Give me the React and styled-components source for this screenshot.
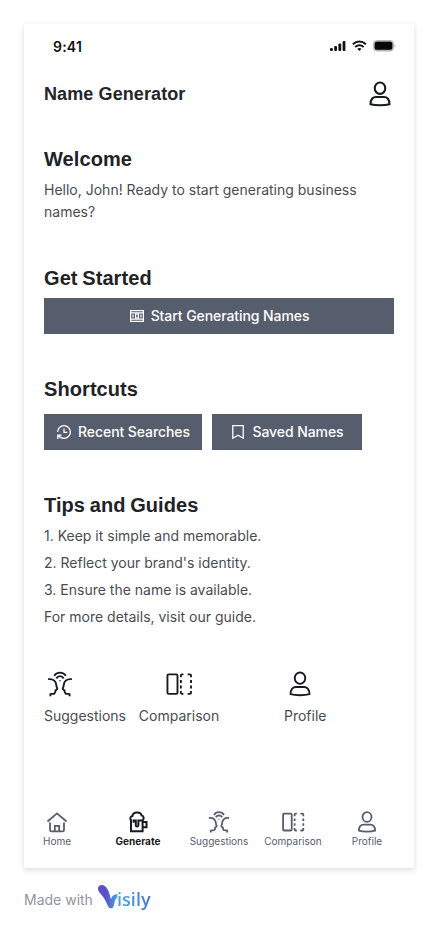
import React from 'react';
import styled, { createGlobalStyle } from 'styled-components';

const GlobalStyle = createGlobalStyle`
  * { box-sizing: border-box; }
  body { margin: 0; background: #fff; font-family: Inter, "Liberation Sans", sans-serif; }
  svg { display: block; flex: none; }
  p, h1, h2 { margin: 0; padding: 0; }
`;

const Page = styled.div`
  height: 932px;
  padding: 24px 24px 0;
  overflow: hidden;
`;

const Screen = styled.main`
  width: 390px;
  height: 844px;
  background: #fff;
  box-shadow: 0 2px 6px rgba(0, 0, 0, 0.14);
  display: flex;
  flex-direction: column;
`;

const StatusBar = styled.div`
  height: 44px;
  padding: 0 18px 0 29px;
  display: flex;
  align-items: center;
  justify-content: space-between;
`;

const Time = styled.span`
  font-size: 14px;
  font-weight: 600;
  letter-spacing: 0.2px;
  color: #111;
`;

const Header = styled.header`
  height: 52px;
  margin-bottom: 24px;
  padding: 0 20px;
  display: flex;
  align-items: center;
  justify-content: space-between;
  color: #171a1f;
`;

const Title = styled.h1`
  font: 700 18px/28px "Liberation Sans", Arial, sans-serif;
  letter-spacing: 0.1px;
  color: #22252b;
`;

const Section = styled.section`
  height: ${(p) => p.$height}px;
  padding: 0 20px;
`;

const Heading = styled.h2`
  font: 700 20px/30px "Liberation Sans", Arial, sans-serif;
  letter-spacing: 0.08px;
  word-spacing: -1px;
  margin-bottom: ${(p) => p.$gap}px;
  color: #1f2227;
`;

const Text = styled.p`
  font-size: 14px;
  font-weight: 400;
  line-height: 22px;
  color: #4a4c51;
`;

const Tips = styled.div`
  display: flex;
  flex-direction: column;
  gap: 5px;
`;

const Button = styled.button`
  width: ${(p) => p.$width}px;
  height: 36px;
  padding: 0;
  border: 0;
  background: #565d6d;
  color: #fff;
  font: 500 14px/22px Inter, sans-serif;
  letter-spacing: -0.08px;
  white-space: nowrap;
  display: flex;
  align-items: center;
  justify-content: center;
  gap: 6px;
`;

const ButtonRow = styled.div`
  display: flex;
  gap: 10px;
`;

const LinkRow = styled.div`
  height: 128px;
  padding: 0 20px;
  display: flex;
`;

const LinkItem = styled.div`
  margin-left: ${(p) => p.$before || 0}px;
  display: flex;
  flex-direction: column;
  align-items: ${(p) => (p.$centered ? 'center' : 'flex-start')};
  gap: 5px;
  width: ${(p) => p.$width}px;
  color: #171a1f;
  white-space: nowrap;
`;

const IconSlot = styled.span`
  width: 32px;
  height: 32px;
  display: grid;
  place-items: center;
`;

const TabBar = styled.nav`
  display: grid;
  grid-template-columns: 66px 96px 66px 82px 66px;
  margin-top: 14px;
`;

const Tab = styled.div`
  display: flex;
  flex-direction: column;
  align-items: center;
  color: ${(p) => (p.$active ? '#171a1f' : '#565d6d')};
`;

const TabLabel = styled.span`
  font-size: 10px;
  line-height: 15px;
  font-weight: ${(p) => (p.$active ? 700 : 400)};
  white-space: nowrap;
`;

const Credit = styled.footer`
  height: 30px;
  margin-top: 16px;
  display: flex;
  align-items: center;
  font-size: 14px;
  color: #9095a0;
`;

const Brand = styled.span`
  display: flex;
  align-items: center;
  margin: 0 0 4px 4px;
`;

const BrandText = styled.span`
  margin: 3px 0 0 -5px;
  font: 600 18px/24px "Open Sans", sans-serif;
  letter-spacing: 0.1px;
  background: linear-gradient(90deg, #45a9df, #4b74c4);
  background-clip: text;
  color: transparent;
`;

const Icon = ({ size = 24, weight = 1.7, children }) => (
  <svg width={size} height={size} viewBox="0 0 24 24" fill="none" stroke="currentColor" strokeWidth={weight}>
    {children}
  </svg>
);

const UserIcon = (props) => (
  <Icon {...props}>
    <ellipse cx="12" cy="7" rx="4.5" ry="4.9" />
    <path d="M3.9 20.7C3.8 16.6 5.9 14.6 8.6 14.6h6.8c2.7 0 4.8 2 4.7 6.1-2 .6-4.9.9-8.1.9s-6.1-.3-8.1-.9Z" />
  </Icon>
);

const TalkIcon = (props) => (
  <Icon {...props}>
    <path d="M7 5C8.2 3 10 2.2 12 2.2S15.8 3 17 5M8.8 7.3C9.6 6 10.8 5.3 12 5.3s2.4.7 3.2 2" />
    <path d="M1.8 7.8h1.4c3 0 5.2 2 5.6 4.9.1 1.5.4 2.2.9 3.4-.2.8-1 1-1.6 1.4.1 1.1-.1 2-.7 2.5-1.1.6-2.4.3-3.6.6v2M22.2 7.8h-1.4c-3 0-5.2 2-5.6 4.9-.1 1.5-.4 2.2-.9 3.4.2.8 1 1 1.6 1.4-.1 1.1.1 2 .7 2.5 1.1.6 2.4.3 3.6.6v2" />
    <circle cx="12" cy="9.2" r=".65" fill="currentColor" stroke="none" />
  </Icon>
);

const CompareIcon = (props) => (
  <Icon {...props}>
    <rect x="2.1" y="3.7" width="8.6" height="16.8" rx="1" />
    <path d="M13.6 6.2V4.7a1 1 0 0 1 1-1h1.2M19.4 3.7h1.9a1 1 0 0 1 1 1v1.5M22.3 8.5v2.6M22.3 13.2v2.6M22.3 18v1.5a1 1 0 0 1-1 1h-1.9M15.8 20.5h-1.2a1 1 0 0 1-1-1V18M13.6 8.5v2.6M13.6 13.2v2.6" />
  </Icon>
);

const HomeIcon = (props) => (
  <Icon {...props}>
    <path d="M2.5 11.5 12 3.4l9.5 8.1M5 12.4v7.6q0 1.4 1.4 1.4h11.2q1.4 0 1.4-1.4v-7.6M9.8 21v-5.2h4.4V21" />
  </Icon>
);

const MugIcon = (props) => (
  <Icon {...props}>
    <path d="M5 10.5v10.8h11.6V10.5M16.6 12h3.9v5.2h-3.9" />
    <path d="M5 12.2V10C3.6 8.6 4.4 6.3 6.4 6c.6-4.4 8.3-4.6 9.2-.6 2.2.7 2.8 3 1 5h-4.2v4.9a1.3 1.3 0 0 1-2.6 0v-4.9H7.6v2.4" />
  </Icon>
);

const TicketIcon = () => (
  <svg width="16" height="16" viewBox="0 0 16 16" fill="none" stroke="currentColor" strokeWidth="1.2">
    <path d="M1.6 2.6h12.8v10.8H1.6ZM1.6 4.9h12.8M1.6 11.1h12.8M4.1 6.4v3.2M11.9 6.4v3.2" />
    <rect x="6.6" y="6" width="2.8" height="4" />
  </svg>
);

const HistoryIcon = () => (
  <svg width="16" height="16" viewBox="0 0 16 16" fill="none" stroke="currentColor" strokeWidth="1.3">
    <path d="M1.6 8A6.4 6.4 0 1 1 8 14.4c-2.4 0-4.4-1.1-5.5-3M1.8 15v-3.8h3.8M8 4.4v4h3.2" />
  </svg>
);

const BookmarkIcon = () => (
  <svg width="16" height="16" viewBox="0 0 16 16" fill="none" stroke="currentColor" strokeWidth="1.3">
    <path d="M2.8 1.7h10.4v12.5L8 11.3l-5.2 2.9Z" />
  </svg>
);

const StatusIcons = () => (
  <svg width="67" height="14" viewBox="0 0 67 14">
    <g fill="#111">
      <rect x="1" y="9" width="2.8" height="3" rx="1" />
      <rect x="5.2" y="7" width="2.8" height="5" rx="1" />
      <rect x="9.4" y="4.5" width="2.8" height="7.5" rx="1" />
      <rect x="13.6" y="2" width="2.8" height="10" rx="1" />
    </g>
    <g fill="none" stroke="#111" strokeWidth="2">
      <path d="M23.8 5.2q6.6-5.4 13.2 0M26.1 8q4.3-3.5 8.6 0" />
      <path d="m28.3 9.8 2.1 2.2 2.1-2.2q-2.1-1.4-4.2 0Z" fill="#111" stroke="none" />
    </g>
    <rect x="44.5" y="1.5" width="20" height="10.5" rx="3.3" fill="#aaa" stroke="#bbb" />
    <rect x="45.7" y="2.7" width="17.6" height="8.1" rx="2" fill="#080808" />
    <path d="M65.4 5q2 1.8 0 3.5Z" fill="#aaa" />
  </svg>
);

const BrandMark = () => (
  <svg width="25" height="26" viewBox="0 0 25 26">
    <defs>
      <linearGradient id="wing" x1="0" y1="0" x2="1" y2="0">
        <stop offset="0.4" stopColor="#5b50c8" />
        <stop offset="1" stopColor="#49a9e0" />
      </linearGradient>
    </defs>
    <path d="M1 5.2C.5 1.5 5-.2 8 2.2c3.5 2.7 4.6 7.5 6 13.2 1-3.3 2.6-5.4 6.5-5.5l-.2 3.8c-2.4 1-2.4 4.4-3.3 7.2-.5 2.1-1.5 3.4-3 3.4-3 0-3.4-4.2-6-8.6C5.8 11.4 1.5 8.7 1 5.2Z" fill="url(#wing)" />
  </svg>
);

const tips = [
  '1. Keep it simple and memorable.',
  "2. Reflect your brand's identity.",
  '3. Ensure the name is available.',
  'For more details, visit our guide.',
];

const links = [
  { label: 'Suggestions', Glyph: TalkIcon, width: 82 },
  { label: 'Comparison', Glyph: CompareIcon, width: 80, before: 13, centered: true },
  { label: 'Profile', Glyph: UserIcon, width: 44, before: 65 },
];

const tabs = [
  { label: 'Home', Glyph: HomeIcon },
  { label: 'Generate', Glyph: MugIcon, active: true },
  { label: 'Suggestions', Glyph: TalkIcon },
  { label: 'Comparison', Glyph: CompareIcon },
  { label: 'Profile', Glyph: UserIcon },
];

export default function App() {
  return (
    <>
      <GlobalStyle />
      <Page>
        <Screen>
          <StatusBar>
            <Time>9:41</Time>
            <StatusIcons />
          </StatusBar>
          <Header>
            <Title>Name Generator</Title>
            <UserIcon size={28} weight={1.8} />
          </Header>
          <Section $height={119}>
            <Heading $gap={5}>Welcome</Heading>
            <Text>Hello, John! Ready to start generating business names?</Text>
          </Section>
          <Section $height={111}>
            <Heading $gap={5}>Get Started</Heading>
            <Button $width={350}><TicketIcon />Start Generating Names</Button>
          </Section>
          <Section $height={116}>
            <Heading $gap={10}>Shortcuts</Heading>
            <ButtonRow>
              <Button $width={158}><HistoryIcon />Recent Searches</Button>
              <Button $width={150}><BookmarkIcon />Saved Names</Button>
            </ButtonRow>
          </Section>
          <Section $height={178}>
            <Heading $gap={5}>Tips and Guides</Heading>
            <Tips>
              {tips.map((tip) => <Text key={tip}>{tip}</Text>)}
            </Tips>
          </Section>
          <LinkRow>
            {links.map(({ label, Glyph, width, before, centered }) => (
              <LinkItem key={label} $width={width} $before={before} $centered={centered}>
                <IconSlot><Glyph size={28} weight={1.6} /></IconSlot>
                <Text>{label}</Text>
              </LinkItem>
            ))}
          </LinkRow>
          <TabBar>
            {tabs.map(({ label, Glyph, active }) => (
              <Tab key={label} $active={active}>
                <Glyph weight={active ? 2 : 1.8} />
                <TabLabel $active={active}>{label}</TabLabel>
              </Tab>
            ))}
          </TabBar>
        </Screen>
        <Credit>
          Made with
          <Brand><BrandMark /><BrandText>isily</BrandText></Brand>
        </Credit>
      </Page>
    </>
  );
}
